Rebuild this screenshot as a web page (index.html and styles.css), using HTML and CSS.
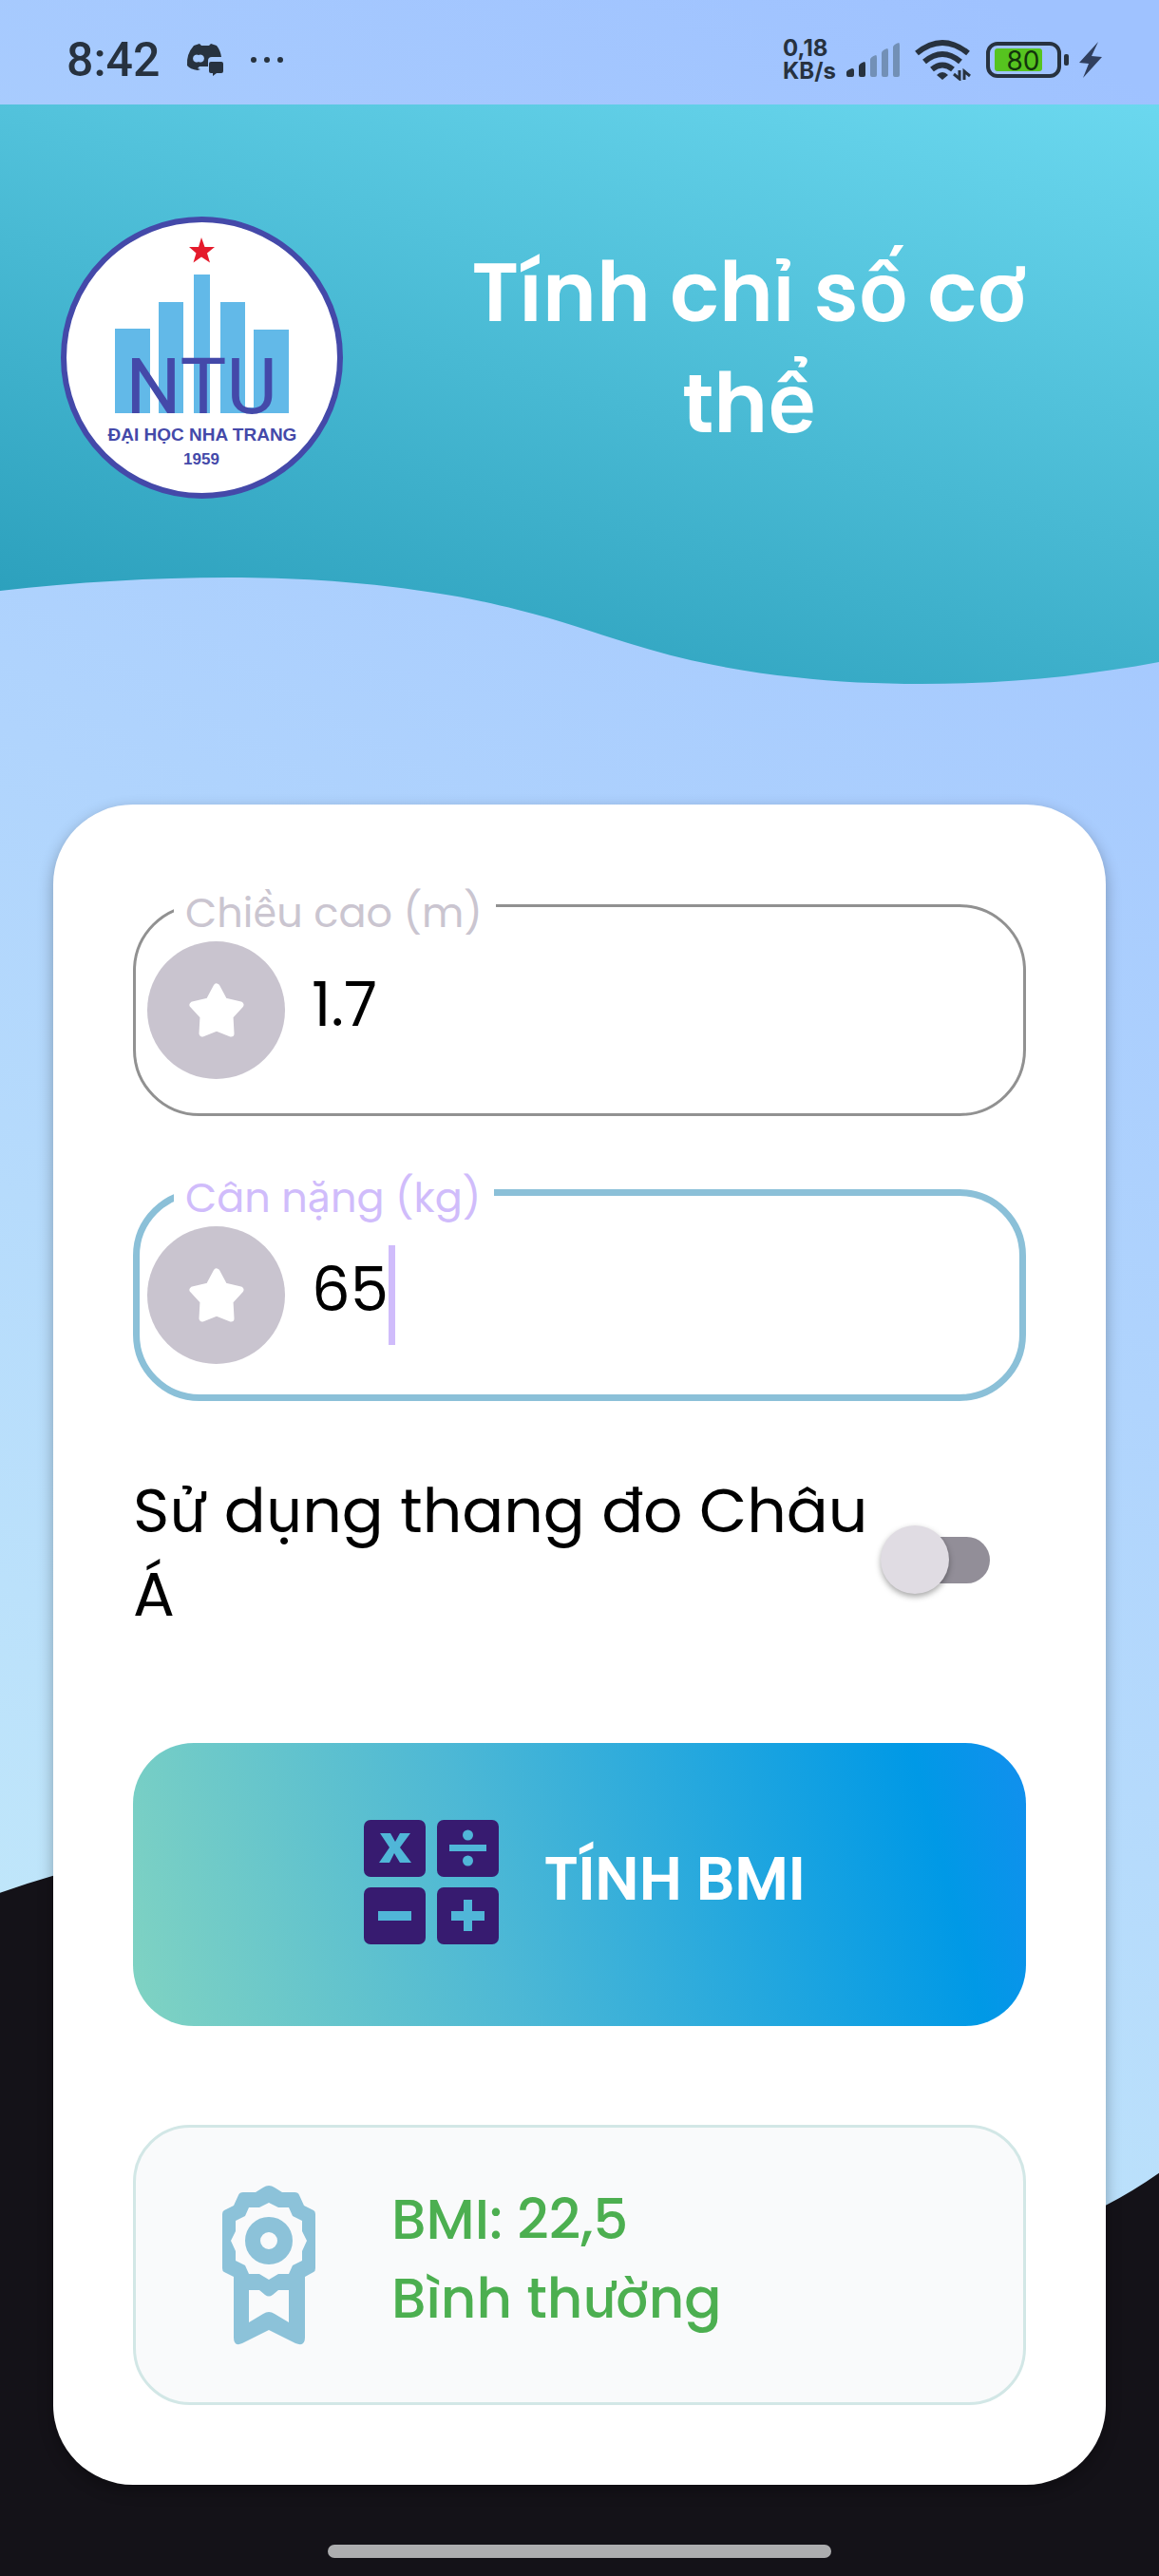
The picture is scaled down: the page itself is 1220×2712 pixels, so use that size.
FILE: index.html
```html
<!DOCTYPE html>
<html lang="vi">
<head>
  <meta charset="utf-8">
  <meta name="viewport" content="width=device-width, initial-scale=1">
  <title>Tính chỉ số cơ thể</title>
  <link rel="stylesheet" href="styles.css">
</head>
<body>
<div class="screen">
  <svg class="backdrop" viewBox="0 0 1220 2712" preserveAspectRatio="none" aria-hidden="true">
    <defs>
      <linearGradient id="sky" gradientUnits="userSpaceOnUse" x1="0" y1="2150" x2="1220" y2="100">
        <stop offset="0" stop-color="#c1e8fa"/>
        <stop offset="0.5" stop-color="#b0d4fd"/>
        <stop offset="1" stop-color="#9fc2ff"/>
      </linearGradient>
    </defs>
    <path fill="url(#sky)" d="M0 0H1220V2287Q1193 2306 1164 2321C900 2470 380 1880 56 1974Q28 1982 0 1992Z"/>
  </svg>

  <div class="status">
    <div class="status__group">
      <span class="status__time">8:42</span>
      <svg class="status__app" width="40" height="36" viewBox="0 0 40 36" aria-hidden="true">
        <path fill="#27323f" fill-rule="evenodd" d="M8 3 14 1 16 3H24L26 1 32 3Q36 8 37 15H27Q23 15 23 19V25H14L12 27 15 28 12 29Q4 28 1 24Q0 12 8 3ZM13 13A4 4 0 1 0 13 20A4 4 0 1 0 13 13Z"/>
        <path fill="#27323f" d="M26 20H37Q39 20 39 22V30Q39 32 37 32H32L28 35V32H26Q24 32 24 30V22Q24 20 26 20Z"/>
      </svg>
      <svg width="34" height="8" viewBox="0 0 34 8" aria-hidden="true">
        <g fill="#27323f"><circle cx="3" cy="4" r="3"/><circle cx="17" cy="4" r="3"/><circle cx="31" cy="4" r="3"/></g>
      </svg>
    </div>
    <div class="status__group status__group--right">
      <div class="status__speed">0,18<br>KB/s</div>
      <svg class="status__signal" width="58" height="38" viewBox="0 0 58 38" aria-hidden="true">
        <path fill="#27323f" d="M1 35V32Q1 30 7 28Q9 28 9 30V35Q9 37 7 37H3Q1 37 1 35ZM14 35V26Q14 23 20 21Q21 21 21 24V35Q21 37 19 37H16Q14 37 14 35Z"/>
        <path fill="#7290b6" d="M26 35V19Q26 16 32 14Q33 14 33 17V35Q33 37 31 37H28Q26 37 26 35ZM38 35V12Q38 9 44 7Q45 7 45 10V35Q45 37 43 37H40Q38 37 38 35ZM50 35V6Q50 3 56 1Q57 1 57 4V35Q57 37 55 37H52Q50 37 50 35Z"/>
      </svg>
      <svg class="status__wifi" width="60" height="44" viewBox="0 0 60 44" aria-hidden="true">
        <g fill="none" stroke="#27323f" stroke-width="6">
          <path d="M3 15Q30 -7 57 15"/><path d="M11 24Q30 8 49 24"/><path d="M19 32Q30 23 41 32"/>
        </g>
        <path fill="#27323f" d="M24 38Q30 32 36 38L30 43Z"/>
        <path fill="none" stroke="#27323f" stroke-width="3" d="M48 33V42L42 37M53 43V34L59 39"/>
      </svg>
      <svg width="88" height="40" viewBox="0 0 88 40" role="img" aria-label="Pin 80%">
        <rect x="2" y="3" width="75" height="34" rx="10" fill="none" stroke="#27323f" stroke-width="4"/>
        <rect x="9" y="8" width="50" height="24" rx="3" fill="#56c41f"/>
        <rect x="82" y="14" width="5" height="12" rx="2" fill="#27323f"/>
        <text class="status__battery" x="39" y="31" text-anchor="middle">80</text>
      </svg>
      <svg class="status__bolt" width="24" height="38" viewBox="0 0 24 38" aria-hidden="true">
        <path fill="#303f5e" d="M20 0 0 22 10 23 4 38 24 16 13 15Z"/>
      </svg>
    </div>
  </div>

  <header class="header">
    <svg class="header__wave" viewBox="0 0 1220 610" preserveAspectRatio="none" aria-hidden="true">
      <defs>
        <linearGradient id="sea" gradientUnits="userSpaceOnUse" x1="492" y1="744" x2="728" y2="-134">
          <stop offset="0" stop-color="#259ab7"/>
          <stop offset="1" stop-color="#6bd8ef"/>
        </linearGradient>
      </defs>
      <path fill="url(#sea)" d="M0 0H1220V587C1140 602 1060 610 969 610C925 610 880 608 837 603C808 600 780 596 751 590C720 584 690 576 661 567C625 556 590 543 545 532C510 523 480 517 436 511C380 503 310 498 241 498C160 498 80 503 0 512Z"/>
    </svg>
    <svg class="header__logo" viewBox="0 0 297 297" role="img" aria-label="Đại học Nha Trang">
      <circle cx="148.500" cy="148.500" r="145.500" fill="#fff" stroke="#4449a9" stroke-width="6"/>
      <path fill="#e51b2c" d="M148 22 151.500 32H162L154 38.500 157 48.500 148 42.500 139.500 48.500 142.500 38.500 135 32H145Z"/>
      <path fill="#62b9e8" d="M57 118H94V207H57ZM103 90H129V207H103ZM140 61H157V207H140ZM168 90H194V207H168ZM194 201H203V207H194ZM203 119H240V207H203Z"/>
      <text class="logo-mark" x="148" y="207" text-anchor="middle">NTU</text>
      <text class="logo-name" x="149" y="236" text-anchor="middle">ĐẠI HỌC NHA TRANG</text>
      <text class="logo-year" x="148" y="261" text-anchor="middle">1959</text>
    </svg>
    <h1 class="header__title">Tính chỉ số cơ thể</h1>
  </header>

  <main class="card">
    <div class="field">
      <label class="field__label" for="height">Chiều cao (m)</label>
      <span class="field__icon">
        <svg width="60" height="60" viewBox="0 0 60 60" aria-hidden="true"><path fill="#fff" stroke="#fff" stroke-width="7" stroke-linejoin="round" d="M30 5 38 20 55 24 44 36 45 54 30 48 15 54 16 36 5 24 22 20Z"/></svg>
      </span>
      <input class="field__input" id="height" type="text" inputmode="decimal" value="1.7">
    </div>
    <div class="field field--active">
      <label class="field__label" for="weight">Cân nặng (kg)</label>
      <span class="field__icon">
        <svg width="60" height="60" viewBox="0 0 60 60" aria-hidden="true"><path fill="#fff" stroke="#fff" stroke-width="7" stroke-linejoin="round" d="M30 5 38 20 55 24 44 36 45 54 30 48 15 54 16 36 5 24 22 20Z"/></svg>
      </span>
      <input class="field__input" id="weight" type="text" inputmode="decimal" value="65">
      <span class="field__caret"></span>
    </div>

    <div class="option">
      <label class="option__label" for="asia">Sử dụng thang đo Châu Á</label>
      <input class="switch" id="asia" type="checkbox" role="switch">
    </div>

    <button class="submit" type="button">
      <svg width="142" height="132" viewBox="0 0 142 132" aria-hidden="true">
        <g fill="#371b70">
          <rect width="65" height="60" rx="7"/><rect x="77" width="65" height="60" rx="7"/>
          <rect y="71" width="65" height="60" rx="7"/><rect x="77" y="71" width="65" height="60" rx="7"/>
        </g>
        <g fill="#50b6d8">
          <path d="M17 14H28L33 23 38 14H49L38 29 50 45H38L32 35 27 45H16L27 29Z"/>
          <rect x="90" y="26" width="39" height="7"/><circle cx="109.500" cy="16" r="5.500"/><circle cx="109.500" cy="43" r="5.500"/>
          <rect x="15" y="96" width="35" height="10"/>
          <path d="M105 84H114V96H127V106H114V117H105V106H92V96H105Z"/>
        </g>
      </svg>
      <span class="submit__text">TÍNH BMI</span>
    </button>

    <section class="result">
      <svg width="98" height="168" viewBox="0 0 98 168" aria-hidden="true">
        <path fill="#8cc2d9" fill-rule="evenodd" d="M43 2Q49 -2 55 2L63 7H76Q80 7 81 10L86 21 96 26Q98 27 98 30V87Q98 90 96 91L87 96V160Q87 170 77 166L49 152 21 166Q12 170 12 160V96L2 91Q0 90 0 87V30Q0 27 2 26L12 21 17 10Q18 7 22 7H35ZM49 18 39 23H28L24 32 14 37V48L9 58 14 69V79L24 84 28 93H39L49 99 59 93H70L74 84 84 79V69L89 58 84 48V37L74 32 70 23H59ZM28 110V144L43 135Q49 131 55 135L70 144V110H59L53 115Q49 118 45 115L39 110Z"/>
        <circle cx="49" cy="58" r="17" fill="none" stroke="#8cc2d9" stroke-width="16"/>
      </svg>
      <p class="result__text">BMI: 22,5<br>Bình thường</p>
    </section>
  </main>

  <div class="home-bar"></div>
</div>
</body>
</html>
```
FILE: styles.css
```css
* {
  box-sizing: border-box;
}

body {
  margin: 0;
  background: #141218;
  font-family: Poppins, Inter, "Noto Sans", sans-serif;
}

.screen {
  position: relative;
  display: flex;
  flex-direction: column;
  min-height: 100vh;
  overflow: hidden;
}

.backdrop {
  position: absolute;
  inset: 0;
  width: 100%;
  height: 100%;
}

/* Status bar */
.status {
  position: relative;
  display: flex;
  justify-content: space-between;
  align-items: center;
  height: 110px;
  padding: 16px 60px 0 70px;
  color: #27323f;
}

.status__group {
  display: flex;
  align-items: center;
  gap: 28px;
}

.status__group--right {
  gap: 10px;
}

.status__time {
  font: 500 50px/60px Roboto, sans-serif;
}

.status__speed {
  font: 700 24px/24px Inter, sans-serif;
}

.status__wifi {
  margin: 0 6px 0 4px;
}

.status__battery {
  font: 400 28px Inter, sans-serif;
  fill: #12340c;
}

/* Header */
.header {
  position: relative;
  display: flex;
  align-items: flex-start;
  gap: 56px;
  min-height: 610px;
  padding: 118px 60px 0 64px;
}

.header__wave {
  position: absolute;
  inset: 0;
  width: 100%;
  height: 100%;
}

.header__logo {
  position: relative;
  flex: none;
  width: 297px;
  height: 297px;
}

.logo-mark {
  font: 400 82px Roboto, sans-serif;
  fill: #4449a9;
}

.logo-name {
  font: 700 19px "Liberation Sans", sans-serif;
  fill: #4449a9;
}

.logo-year {
  font: 700 17px "Liberation Sans", sans-serif;
  fill: #4449a9;
}

.header__title {
  position: relative;
  flex: 1;
  margin: 22px 0 0;
  padding: 0 40px;
  color: #fff;
  font-size: 86px;
  font-weight: 600;
  line-height: 117px;
  text-align: center;
}

/* Card */
.card {
  position: relative;
  display: flex;
  flex-direction: column;
  margin: 127px 56px 0;
  padding: 105px 84px 84px;
  border-radius: 84px;
  background: #fff;
  box-shadow: 0 6px 16px rgba(0, 0, 0, 0.3);
}

.field {
  position: relative;
  display: flex;
  align-items: center;
  height: 223px;
  padding: 0 40px 0 12px;
  border: 3px solid #919191;
  border-radius: 70px;
}

.field + .field {
  margin-top: 77px;
}

.field--active {
  padding-left: 8px;
  border: 7px solid #8bc0d8;
}

.field__label {
  position: absolute;
  top: -22px;
  left: 40px;
  padding: 0 14px 0 12px;
  background: #fff;
  color: #cac5d0;
  font-size: 43px;
  line-height: 56px;
}

.field--active .field__label {
  top: -26px;
  left: 36px;
  color: #d0bcfb;
}

.field__icon {
  display: grid;
  flex: none;
  place-items: center;
  width: 145px;
  height: 145px;
  border-radius: 50%;
  background: #c9c4cf;
}

.field__input {
  field-sizing: content;
  min-width: 0;
  height: 120px;
  margin: 0 0 0 28px;
  padding: 0 0 12px;
  border: 0;
  outline: 0;
  background: none;
  color: #000;
  font: inherit;
  font-size: 64px;
}

.field__caret {
  width: 7px;
  height: 105px;
  background: #d0bcfb;
}

.option {
  display: flex;
  align-items: center;
  margin-top: 72px;
  padding-right: 38px;
}

.option__label {
  flex: 1;
  font-size: 65px;
  line-height: 88px;
}

.switch {
  position: relative;
  display: flex;
  flex: none;
  align-items: center;
  width: 115px;
  height: 72px;
  margin: 14px 0 0;
  appearance: none;
}

.switch::before {
  content: "";
  width: 107px;
  height: 49px;
  margin-left: 8px;
  border-radius: 25px;
  background: #928e98;
}

.switch::after {
  content: "";
  position: absolute;
  top: 0;
  left: 0;
  width: 72px;
  height: 72px;
  border-radius: 50%;
  background: #e0dce3;
  box-shadow: 0 3px 6px rgba(0, 0, 0, 0.35);
}

.submit {
  display: flex;
  align-items: center;
  justify-content: center;
  gap: 48px;
  height: 298px;
  margin-top: 112px;
  padding: 0 0 4px 10px;
  border: 0;
  border-radius: 64px;
  background: linear-gradient(75deg, #80d3c2, #4db8d5 40%, #0099e6 88%, #128fee);
  color: #fff;
  font: inherit;
  font-size: 63px;
  font-weight: 600;
}

.submit__text {
  padding-bottom: 8px;
}

.result {
  display: flex;
  align-items: center;
  gap: 80px;
  height: 295px;
  margin-top: 104px;
  padding: 0 60px 0 91px;
  border: 3px solid #d2e7e6;
  border-radius: 60px;
  background: #f9fafb;
}

.result__text {
  margin: 0 0 14px;
  color: #4caf50;
  font-size: 58px;
  font-weight: 500;
  line-height: 83px;
}

.home-bar {
  position: relative;
  width: 530px;
  max-width: 60%;
  height: 14px;
  margin: 63px auto 20px;
  border-radius: 7px;
  background: #adadaf;
}
```
